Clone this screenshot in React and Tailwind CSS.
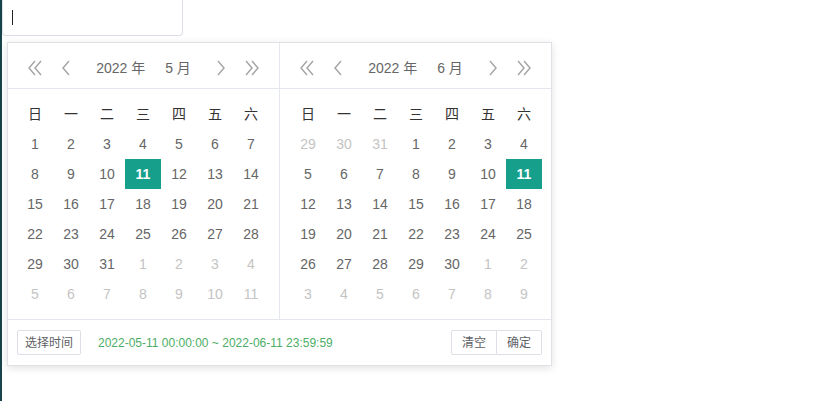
import React from "react";

const FONT = {
  fontFamily:
    '"Liberation Sans", Arial, "Noto Sans CJK SC", sans-serif',
};

function DoubleLeft() {
  return (
    <svg width="20" height="20" viewBox="0 0 20 20" fill="none">
      <polyline points="9,3 3,10 9,17" stroke="#a3a3a3" strokeWidth="1.4" />
      <polyline points="15,3 9,10 15,17" stroke="#a3a3a3" strokeWidth="1.4" />
    </svg>
  );
}

function DoubleRight() {
  return (
    <svg width="20" height="20" viewBox="0 0 20 20" fill="none">
      <polyline points="5,3 11,10 5,17" stroke="#a3a3a3" strokeWidth="1.4" />
      <polyline points="11,3 17,10 11,17" stroke="#a3a3a3" strokeWidth="1.4" />
    </svg>
  );
}

function Left() {
  return (
    <svg width="20" height="20" viewBox="0 0 20 20" fill="none">
      <polyline points="13,3 7,10 13,17" stroke="#a3a3a3" strokeWidth="1.4" />
    </svg>
  );
}

function Right() {
  return (
    <svg width="20" height="20" viewBox="0 0 20 20" fill="none">
      <polyline points="7,3 13,10 7,17" stroke="#a3a3a3" strokeWidth="1.4" />
    </svg>
  );
}

const WEEK = ["日", "一", "二", "三", "四", "五", "六"];

const MAY = [
  [1, 2, 3, 4, 5, 6, 7],
  [8, 9, 10, 11, 12, 13, 14],
  [15, 16, 17, 18, 19, 20, 21],
  [22, 23, 24, 25, 26, 27, 28],
  [29, 30, 31, "1o", "2o", "3o", "4o"],
  ["5o", "6o", "7o", "8o", "9o", "10o", "11o"],
];

const JUNE = [
  ["29o", "30o", "31o", 1, 2, 3, 4],
  [5, 6, 7, 8, 9, 10, 11],
  [12, 13, 14, 15, 16, 17, 18],
  [19, 20, 21, 22, 23, 24, 25],
  [26, 27, 28, 29, 30, "1o", "2o"],
  ["3o", "4o", "5o", "6o", "7o", "8o", "9o"],
];

function Month({ year, month, rows, className, padClass }) {
  return (
    <div className={className}>
      <div className="h-[46px] pt-[5px] px-[18px] flex items-center gap-[10px] border-b border-[#e4e7ed]">
        <DoubleLeft />
        <Left />
        <div className="flex-1 flex justify-center gap-[20px] text-[14px] text-[#666]">
          <span>{year} 年</span>
          <span>{month} 月</span>
        </div>
        <Right />
        <DoubleRight />
      </div>
      <div className={padClass}>
        <div className="grid grid-cols-[repeat(7,36px)]">
          {WEEK.map((w) => (
            <div
              key={w}
              className="h-[29px] flex items-center justify-center text-[14px] text-[#333]"
            >
              {w}
            </div>
          ))}
          {rows.flat().map((d, i) => {
            const other = typeof d === "string";
            const label = other ? d.slice(0, -1) : d;
            const selected = d === 11;
            return (
              <div
                key={i}
                className={
                  selected
                    ? "h-[30px] flex items-center justify-center text-[14px] font-bold text-white bg-[#16a08c]"
                    : other
                    ? "h-[30px] flex items-center justify-center text-[14px] text-[#c4c4c4]"
                    : "h-[30px] flex items-center justify-center text-[14px] text-[#666]"
                }
              >
                {label}
              </div>
            );
          })}
        </div>
      </div>
    </div>
  );
}

export default function App() {
  return (
    <div className="flex w-[823px] h-[401px] bg-white" style={FONT}>
      <div className="w-[2px] h-full bg-[#17444a]" />
      <div className="flex flex-col">
        <div className="w-[181px] h-[36px] border border-t-0 border-[#dcdfe6] rounded-b-[4px] flex items-center pl-[9px]">
          <div className="w-px h-[15px] bg-[#222]" />
        </div>
        <div className="ml-[5px] mt-[6px] w-[545px] border border-[#dfe1e6] bg-white shadow-[0_2px_8px_rgba(0,0,0,0.12)]">
          <div className="flex">
            <Month
              year={2022}
              month={5}
              rows={MAY}
              className="w-[272px] border-r border-[#e4e7ed]"
              padClass="pl-[9px] pr-[10px] pt-[11px] pb-[10px]"
            />
            <Month
              year={2022}
              month={6}
              rows={JUNE}
              className="flex-1"
              padClass="pl-[10px] pr-[9px] pt-[11px] pb-[10px]"
            />
          </div>
          <div className="border-t border-[#e4e7ed] h-[46px] px-[9px] flex items-center">
            <button className="h-[25px] w-[64px] border border-[#dcdfe6] rounded-[2px] text-[12px] text-[#606266] bg-white">
              选择时间
            </button>
            <span className="ml-[17px] text-[12px] text-[#4cae66]">
              2022-05-11 00:00:00 ~ 2022-06-11 23:59:59
            </span>
            <div className="ml-auto flex">
              <button className="h-[25px] w-[46px] border border-[#dcdfe6] rounded-l-[2px] text-[12px] text-[#606266] bg-white">
                清空
              </button>
              <button className="h-[25px] w-[45px] border border-l-0 border-[#dcdfe6] rounded-r-[2px] text-[12px] text-[#606266] bg-white">
                确定
              </button>
            </div>
          </div>
        </div>
      </div>
    </div>
  );
}
